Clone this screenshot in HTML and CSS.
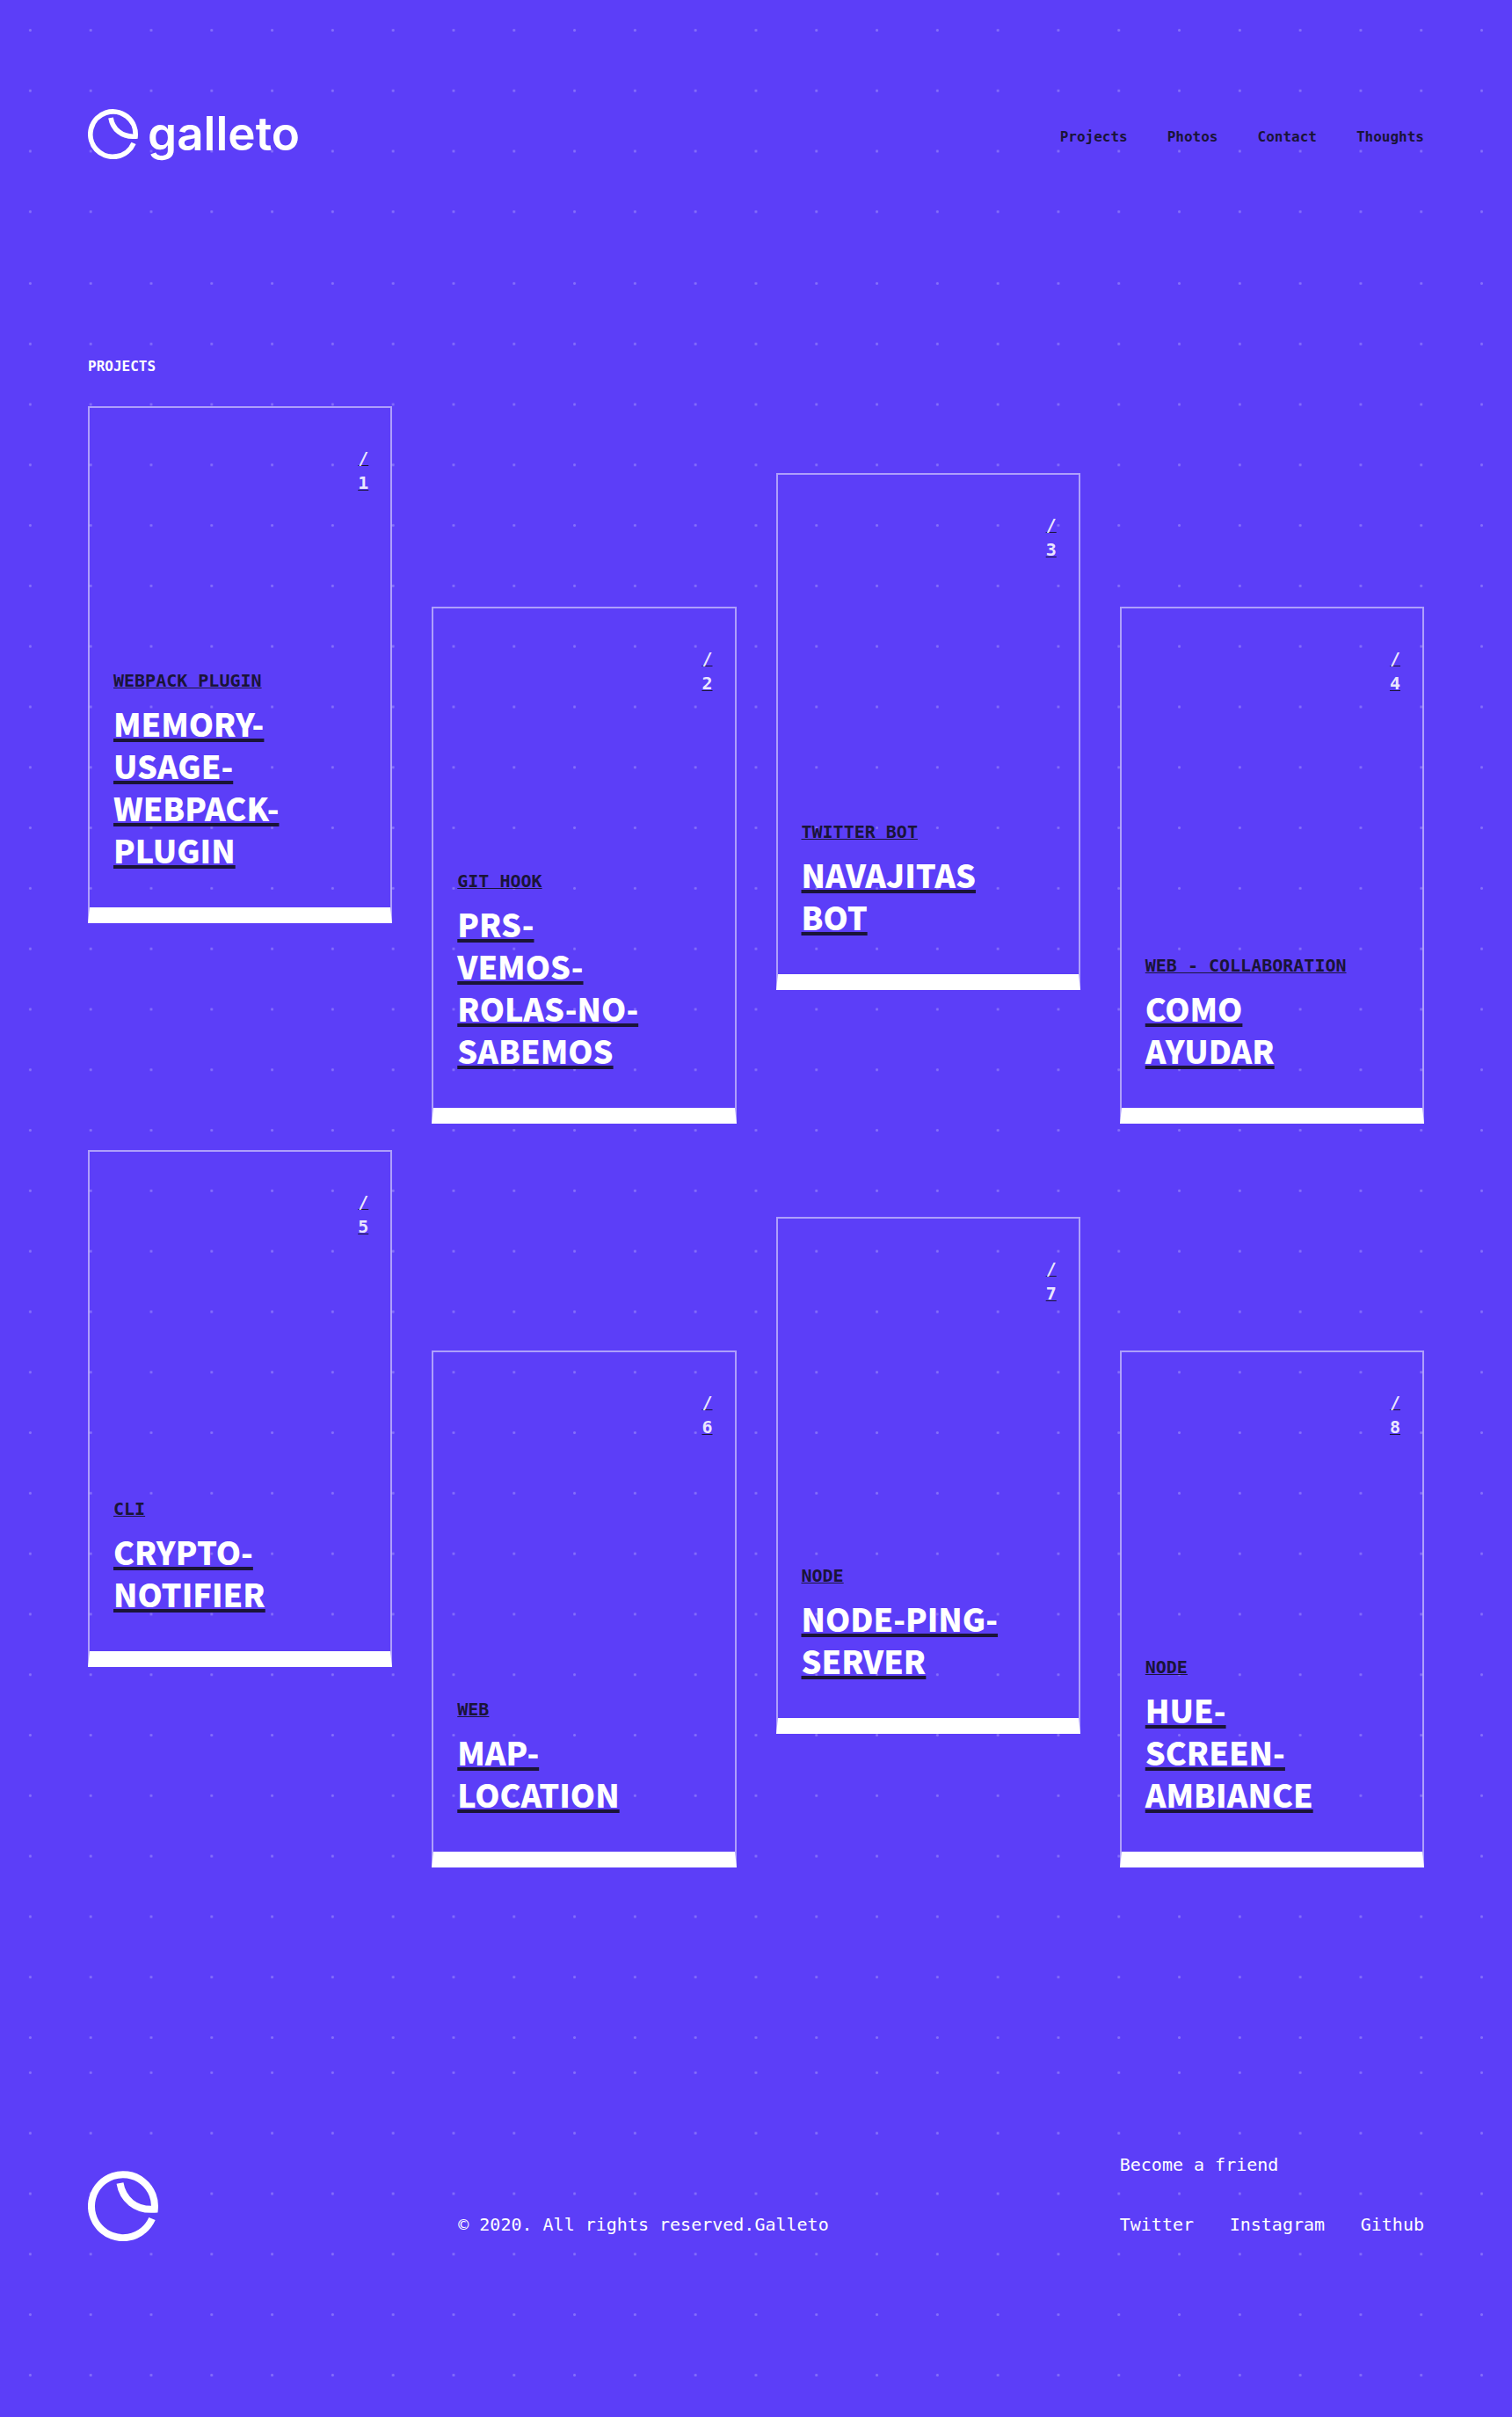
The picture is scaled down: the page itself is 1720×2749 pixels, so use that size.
FILE: index.html
```html
<!DOCTYPE html>
<html lang="en">
<head>
<meta charset="utf-8">
<meta name="viewport" content="width=device-width, initial-scale=1">
<title>Galleto</title>
<link rel="stylesheet" href="styles.css">
</head>
<body>
<header class="site-header dotted">
  <a class="logo" href="#">
    <svg class="logo-mark" viewBox="0 0 80 80" aria-hidden="true"><path d="M36.5 14C39.5 32 54 45.5 75.8 43.7A36 36 0 1 0 73 54.5"/></svg>
    <span class="logo-name">galleto</span>
  </a>
  <nav class="main-nav">
    <a href="#projects">Projects</a>
    <a href="#">Photos</a>
    <a href="#">Contact</a>
    <a href="#">Thoughts</a>
  </nav>
</header>
<main class="projects dotted" id="projects">
  <h1 class="section-title">Projects</h1>
  <div class="project-grid">
    <a class="card" href="#"><span class="number">/<br>1</span><span class="info"><span class="category">Webpack plugin</span><span class="title">memory-<br>usage-<br>webpack-<br>plugin</span></span></a>
    <a class="card" href="#"><span class="number">/<br>2</span><span class="info"><span class="category">Git hook</span><span class="title">prs-<br>vemos-<br>rolas-no-<br>sabemos</span></span></a>
    <a class="card" href="#"><span class="number">/<br>3</span><span class="info"><span class="category">Twitter bot</span><span class="title">Navajitas<br>bot</span></span></a>
    <a class="card" href="#"><span class="number">/<br>4</span><span class="info"><span class="category">Web - collaboration</span><span class="title">Como<br>ayudar</span></span></a>
    <a class="card" href="#"><span class="number">/<br>5</span><span class="info"><span class="category">CLI</span><span class="title">crypto-<br>notifier</span></span></a>
    <a class="card" href="#"><span class="number">/<br>6</span><span class="info"><span class="category">Web</span><span class="title">map-<br>location</span></span></a>
    <a class="card" href="#"><span class="number">/<br>7</span><span class="info"><span class="category">Node</span><span class="title">node-ping-<br>server</span></span></a>
    <a class="card" href="#"><span class="number">/<br>8</span><span class="info"><span class="category">Node</span><span class="title">hue-<br>screen-<br>ambiance</span></span></a>
  </div>
</main>
<footer class="site-footer dotted">
  <a class="footer-mark" href="#" aria-label="Galleto"><svg viewBox="0 0 80 80" aria-hidden="true"><path d="M36.5 14C39.5 32 54 45.5 75.8 43.7A36 36 0 1 0 73 54.5"/></svg></a>
  <p class="copyright">© 2020. All rights reserved.Galleto</p>
  <div class="friends">
    <p>Become a friend</p>
    <div class="social">
      <a href="#">Twitter</a>
      <a href="#">Instagram</a>
      <a href="#">Github</a>
    </div>
  </div>
</footer>
</body>
</html>
```
FILE: styles.css
```css
:root {
  --violet: #5c3ef8;
  --ink: #1a1438;
  --white: #fff;
}

* {
  box-sizing: border-box;
}

body {
  margin: 0;
  background: var(--violet);
  color: var(--white);
  font: 20px/28px "DejaVu Sans Mono", "Liberation Mono", monospace;
}

p {
  margin: 0;
}

a {
  color: inherit;
  text-decoration: none;
}

svg {
  display: block;
  fill: none;
  stroke: var(--white);
  stroke-width: 8;
}

.dotted {
  padding-inline: 100px;
  background-image: radial-gradient(circle, rgba(255, 255, 255, 0.25) 1px, transparent 2px);
  background-size: 4vw 4vw;
}

.site-header {
  display: flex;
  justify-content: space-between;
  align-items: center;
  padding-top: 120px;
  padding-bottom: 104px;
}

.logo {
  display: flex;
  align-items: center;
  gap: 11px;
  height: 64px;
}

.logo-mark {
  width: 57px;
}

.logo-name {
  font: 600 53px/62px Inter, sans-serif;
}

.main-nav {
  display: flex;
  gap: 45px;
  padding-top: 8px;
  color: var(--ink);
  font-size: 16px;
  font-weight: 700;
  line-height: 24px;
}

.projects {
  padding-top: 117px;
  padding-bottom: 199px;
}

.section-title {
  margin: 0 0 33px;
  font-size: 16px;
  line-height: 24px;
  text-transform: uppercase;
}

.project-grid {
  display: grid;
  grid-template-columns: repeat(4, 1fr);
  align-items: start;
  gap: 30px 45px;
}

.card {
  display: flex;
  flex-direction: column;
  justify-content: space-between;
  min-height: 588px;
  padding: 43px 25px 42px 27px;
  border: 2px solid rgba(255, 255, 255, 0.5);
  border-bottom: 18px solid var(--white);
  text-transform: uppercase;
  font-weight: 700;
}

.card:nth-child(even) {
  margin-top: 228px;
}

.card:nth-child(4n + 3) {
  margin-top: 76px;
}

.number,
.category,
.title {
  text-decoration: underline 1px var(--ink);
  text-decoration-skip-ink: none;
  text-underline-offset: 1px;
}

.number {
  align-self: flex-end;
  color: rgba(255, 255, 255, 0.9);
}

.info {
  display: flex;
  flex-direction: column;
  gap: 10px;
}

.category {
  color: var(--ink);
}

.title {
  font: 900 36px/48px "Noto Sans CJK JP", "Liberation Sans", sans-serif;
  text-decoration-thickness: 4px;
  text-underline-offset: 2px;
}

.site-footer {
  display: grid;
  grid-template-columns: repeat(4, 1fr);
  align-items: end;
  column-gap: 45px;
  padding-top: 125px;
  padding-bottom: 200px;
}

.footer-mark {
  width: 80px;
}

.copyright {
  grid-column: span 2;
  padding: 0 0 5px 30px;
}

.friends {
  display: flex;
  flex-direction: column;
  gap: 40px;
  padding-bottom: 5px;
}

.social {
  display: flex;
  justify-content: space-between;
}
```
